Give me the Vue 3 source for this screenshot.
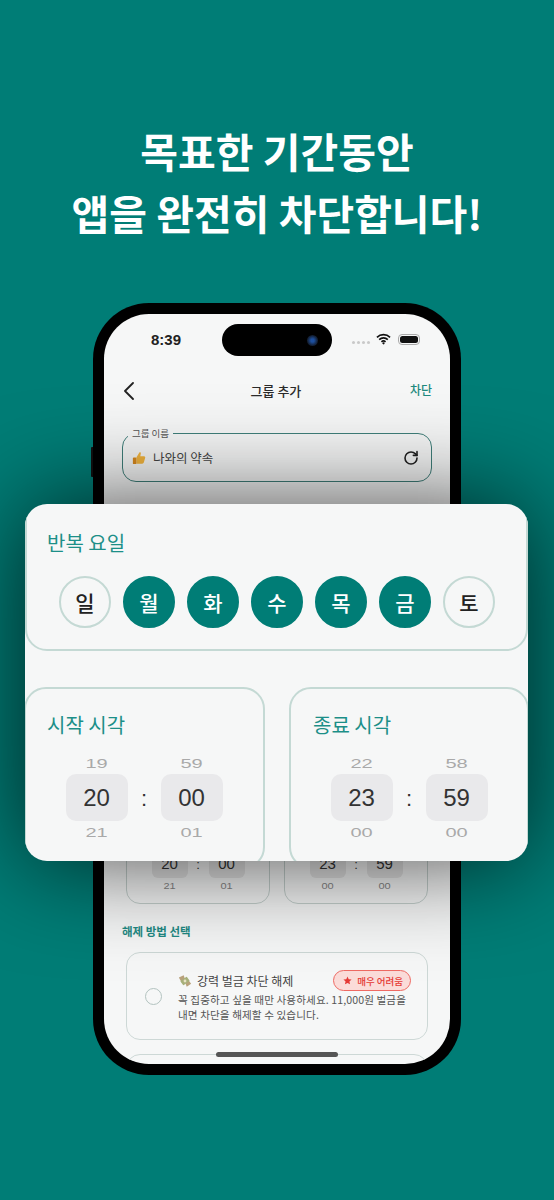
<script setup>
const days = [
  { label: '일', on: false },
  { label: '월', on: true },
  { label: '화', on: true },
  { label: '수', on: true },
  { label: '목', on: true },
  { label: '금', on: true },
  { label: '토', on: false }
]

const times = [
  { title: '시작 시각', hour: ['19', '20', '21'], min: ['59', '00', '01'] },
  { title: '종료 시각', hour: ['22', '23', '00'], min: ['58', '59', '00'] }
]
</script>

<template>
  <div class="page">
    <h1 class="headline">목표한 기간동안<br />앱을 완전히 차단합니다!</h1>

    <div class="phone">
      <span class="side-key"></span>
      <div class="screen">
        <div class="status">
          <span class="clock">8:39</span>
          <span class="island"><i class="camera"></i></span>
          <span class="signal"><i></i><i></i><i></i><i></i></span>
          <svg class="wifi" viewBox="0 0 16 12">
            <path d="M1 4.2a10 10 0 0 1 14 0M3.4 6.7a6.6 6.6 0 0 1 9.2 0M5.8 9a3.2 3.2 0 0 1 4.4 0" fill="none" stroke="#111" stroke-width="1.7" />
            <circle cx="8" cy="10.6" r="1.2" fill="#111" />
          </svg>
          <span class="battery"><i></i></span>
        </div>

        <div class="nav">
          <svg class="back" viewBox="0 0 10 18">
            <path d="M9 1 1 9l8 8" fill="none" stroke="#222" stroke-width="1.8" stroke-linecap="round" stroke-linejoin="round" />
          </svg>
          <span class="nav-title">그룹 추가</span>
          <span class="nav-action">차단</span>
        </div>

        <div class="name-field">
          <span class="field-label">그룹 이름</span>
          <svg class="thumb" viewBox="0 0 16 16">
            <path d="M5 7.5 8.4 1.6c.9-.6 1.9 0 1.7 1.2L9.5 6h4.2c1.2 0 1.7 1 1.3 2l-1.5 5.2c-.3.8-.9 1.3-1.8 1.3H5z" fill="#f4b63f" />
            <rect x="1" y="7.5" width="4" height="7.4" rx="1" fill="#d98a1f" />
          </svg>
          <span class="field-text">나와의 약속</span>
          <svg class="reload" viewBox="0 0 24 24">
            <path d="M21 12a9 9 0 1 1-9-9c2.52 0 4.93 1 6.74 2.74L21 8" fill="none" stroke="#222" stroke-width="2.4" stroke-linecap="round" stroke-linejoin="round" />
            <path d="M21 2.5V8h-5.5" fill="none" stroke="#222" stroke-width="2.4" stroke-linecap="round" stroke-linejoin="round" />
          </svg>
        </div>

        <!-- covered by the zoomed card -->
        <div class="day-card"></div>

        <div class="mini-row">
          <div class="mini-card" v-for="t in times" :key="t.title">
            <div class="mini-picker">
              <div class="mini-col">
                <span class="mini-side">{{ t.hour[0] }}</span>
                <span class="mini-now">{{ t.hour[1] }}</span>
                <span class="mini-side">{{ t.hour[2] }}</span>
              </div>
              <span class="mini-colon">:</span>
              <div class="mini-col">
                <span class="mini-side">{{ t.min[0] }}</span>
                <span class="mini-now">{{ t.min[1] }}</span>
                <span class="mini-side">{{ t.min[2] }}</span>
              </div>
            </div>
          </div>
        </div>

        <div class="method-title">해제 방법 선택</div>

        <div class="method-card">
          <span class="radio"></span>
          <div class="method-body">
            <div class="method-head">
              <svg class="money" viewBox="0 0 16 16">
                <path d="M1 4 6.5 1.5 8 6 4 9.5z" fill="#b9a27c" />
                <path d="M15 11 10 14.5 8.5 10.5 12 7z" fill="#b9a27c" />
                <rect x="3.5" y="5" width="9" height="6" rx=".8" transform="rotate(-35 8 8)" fill="#a7b07a" />
                <circle cx="8" cy="8" r="1.6" fill="#e8e2c4" />
              </svg>
              <span class="method-name">강력 벌금 차단 해제</span>
              <span class="badge">
                <svg class="star" viewBox="0 0 12 12">
                  <path d="m6 .8 1.6 3.5 3.8.4-2.8 2.6.8 3.8L6 9.2l-3.4 1.9.8-3.8L.6 4.7l3.8-.4z" fill="#e53935" />
                </svg>
                매우 어려움
              </span>
            </div>
            <p class="method-text">꼭 집중하고 싶을 때만 사용하세요. 11,000원 벌금을<br />내면 차단을 해제할 수 있습니다.</p>
          </div>
        </div>

        <div class="method-card next"></div>
        <span class="home-bar"></span>
      </div>
    </div>

    <div class="zoom-card">
      <section class="days">
        <h2 class="zoom-title">반복 요일</h2>
        <div class="day-row">
          <span v-for="d in days" :key="d.label" class="day" :class="{ on: d.on }">{{ d.label }}</span>
        </div>
      </section>

      <div class="time-row">
        <section class="time-card" v-for="t in times" :key="t.title">
          <h2 class="zoom-title">{{ t.title }}</h2>
          <div class="picker">
            <div class="col">
              <span class="side">{{ t.hour[0] }}</span>
              <span class="now">{{ t.hour[1] }}</span>
              <span class="side">{{ t.hour[2] }}</span>
            </div>
            <span class="colon">:</span>
            <div class="col">
              <span class="side">{{ t.min[0] }}</span>
              <span class="now">{{ t.min[1] }}</span>
              <span class="side">{{ t.min[2] }}</span>
            </div>
          </div>
        </section>
      </div>
    </div>
  </div>
</template>

<style scoped>
.page {
  position: relative;
  width: 554px;
  height: 1200px;
  overflow: hidden;
  background: #007d76;
  display: flex;
  flex-direction: column;
  align-items: center;
  font-family: "Noto Sans CJK KR", "Noto Sans", sans-serif;
}

.headline {
  margin: 119px 0 60px;
  color: #fff;
  font-size: 41px;
  line-height: 62px;
  font-weight: 700;
  text-align: center;
  white-space: nowrap;
}

/* phone */
.phone {
  position: relative;
  flex: none;
  width: 368px;
  height: 772px;
  padding: 11px;
  box-sizing: border-box;
  background: #000;
  border-radius: 56px;
}
.side-key {
  position: absolute;
  left: -2px;
  top: 144px;
  width: 2px;
  height: 30px;
  background: #111;
  border-radius: 1px 0 0 1px;
}
.screen {
  position: relative;
  height: 750px;
  padding: 0 18px;
  box-sizing: border-box;
  overflow: hidden;
  background: #f6f7f7;
  border-radius: 45px;
}

.status {
  position: relative;
  height: 52px;
  display: flex;
  align-items: center;
  margin: 0 -18px;
  padding-left: 47px;
  box-sizing: border-box;
}
.clock {
  font-family: "Liberation Sans", sans-serif;
  font-size: 15px;
  font-weight: 700;
  color: #222;
  width: 71px;
  margin-top: -2px;
}
.island {
  display: block;
  position: relative;
  width: 110px;
  height: 32px;
  margin-top: -1px;
  border-radius: 16px;
  background: #000;
}
.camera {
  position: absolute;
  left: 85px;
  top: 11px;
  width: 11px;
  height: 11px;
  border-radius: 50%;
  background: radial-gradient(circle, #1d4f9e 20%, #14233c 60%, #0b0b0f 100%);
}
.signal {
  display: flex;
  gap: 2px;
  margin-left: 20px;
  margin-top: 4px;
}
.signal i {
  width: 3px;
  height: 3px;
  border-radius: 50%;
  background: #c9c9c9;
}
.wifi {
  width: 15px;
  height: 12px;
  margin-left: 6px;
  margin-top: -2px;
}
.battery {
  display: block;
  width: 22px;
  height: 11px;
  margin-left: 7px;
  margin-top: -1px;
  padding: 1px;
  box-sizing: border-box;
  border: 1px solid #aaa;
  border-radius: 4px;
}
.battery i {
  display: block;
  height: 100%;
  background: #111;
  border-radius: 2.5px;
}

.nav {
  height: 48px;
  display: flex;
  align-items: center;
  justify-content: space-between;
  padding-left: 2px;
}
.back {
  width: 10px;
  height: 18px;
  margin-top: 1px;
}
.nav-title {
  font-size: 13px;
  font-weight: 500;
  color: #2b2b2b;
  margin-left: 8px;
}
.nav-action {
  font-size: 12px;
  font-weight: 500;
  color: #1f8a7f;
  margin-top: -1px;
}

.name-field {
  position: relative;
  height: 49px;
  margin-top: 19px;
  padding: 0 12px 0 9px;
  box-sizing: border-box;
  display: flex;
  align-items: center;
  border: 1px solid #3f7f7a;
  border-radius: 14px;
}
.field-label {
  position: absolute;
  left: 5px;
  top: -7px;
  padding: 0 4px;
  background: #f6f7f7;
  font-size: 9.5px;
  line-height: 13px;
  color: #555;
}
.thumb {
  width: 14px;
  height: 14px;
  margin-right: 7px;
  margin-top: 1px;
}
.field-text {
  flex: 1;
  font-size: 12.5px;
  color: #444;
}
.reload {
  width: 16px;
  height: 16px;
}

.day-card {
  height: 274px;
  margin: 24px 4px 15px;
}

.mini-row {
  display: flex;
  gap: 14px;
  margin: 0 4px;
}
.mini-card {
  flex: 1;
  height: 109px;
  box-sizing: border-box;
  border: 1px solid #c4d0cd;
  border-radius: 14px;
  display: flex;
  align-items: flex-end;
  justify-content: center;
  padding-bottom: 9px;
}
.mini-picker {
  display: flex;
  align-items: center;
  font-family: "Liberation Sans", sans-serif;
}
.mini-col {
  display: flex;
  flex-direction: column;
  align-items: center;
  width: 36px;
}
.mini-side {
  height: 16px;
  font-size: 11px;
  line-height: 16px;
  color: #888;
  transform: scaleY(.75);
}
.mini-now {
  width: 36px;
  height: 28px;
  border-radius: 6px;
  background: #e4e4e4;
  text-align: center;
  font-size: 15px;
  line-height: 28px;
  color: #333;
}
.mini-colon {
  width: 21px;
  text-align: center;
  font-size: 13px;
  color: #333;
}

.method-title {
  margin-top: 19px;
  height: 16px;
  font-size: 11.5px;
  line-height: 16px;
  font-weight: 700;
  color: #1f8a84;
}
.method-card {
  height: 88px;
  margin: 13px 4px 0;
  padding: 0 16px 0 18px;
  box-sizing: border-box;
  display: flex;
  align-items: center;
  gap: 16px;
  border: 1px solid #cdd8d6;
  border-radius: 14px;
}
.method-card.next {
  margin-top: 14px;
}
.radio {
  flex: none;
  width: 17px;
  height: 17px;
  box-sizing: border-box;
  border: 1.5px solid #b3c3c0;
  border-radius: 50%;
}
.method-body {
  flex: 1;
  min-width: 0;
}
.method-head {
  display: flex;
  align-items: center;
}
.money {
  width: 14px;
  height: 14px;
  margin-right: 5px;
}
.method-name {
  flex: 1;
  font-size: 12px;
  color: #444;
  white-space: nowrap;
}
.badge {
  display: flex;
  align-items: center;
  gap: 5px;
  height: 21px;
  padding: 0 7px 0 9px;
  box-sizing: border-box;
  border: 1px solid #ef6a63;
  border-radius: 11px;
  background: #fbdcd9;
  font-size: 9.5px;
  font-weight: 500;
  color: #e53935;
  white-space: nowrap;
}
.star {
  width: 9px;
  height: 9px;
}
.method-text {
  margin: 1px 0 0;
  font-size: 10.6px;
  line-height: 15px;
  letter-spacing: .1px;
  color: #555;
  white-space: nowrap;
}
.home-bar {
  position: absolute;
  left: 112px;
  bottom: 7px;
  width: 122px;
  height: 5px;
  border-radius: 3px;
  background: #555;
}

/* zoomed card on top of the phone */
.zoom-card {
  position: absolute;
  left: 25px;
  top: 504px;
  width: 503px;
  height: 357px;
  overflow: hidden;
  border-radius: 22px;
  background: #f6f7f7;
  box-shadow: 0 0 100px rgba(0, 0, 0, .72);
}
.zoom-title {
  margin: 0;
  font-size: 20px;
  line-height: 24px;
  font-weight: 400;
  color: #1c8f88;
}
.days {
  margin-top: -24px;
  height: 171px;
  padding: 49px 0 0 20px;
  box-sizing: border-box;
  border: 2px solid #c4d9d4;
  border-radius: 22px;
}
.day-row {
  display: flex;
  gap: 12px;
  margin-top: 21px;
  padding-left: 12px;
}
.day {
  flex: none;
  width: 52px;
  height: 52px;
  box-sizing: border-box;
  border: 2px solid #c4d9d4;
  border-radius: 50%;
  display: flex;
  align-items: center;
  justify-content: center;
  font-size: 21px;
  font-weight: 500;
  color: #222;
}
.day.on {
  border-color: #007d76;
  background: #007d76;
  color: #fff;
}
.time-row {
  display: flex;
  gap: 24px;
  margin-top: 36px;
}
.time-card {
  flex: none;
  width: 240px;
  height: 182px;
  padding: 24px 0 0 22px;
  box-sizing: border-box;
  border: 2px solid #c4d9d4;
  border-radius: 22px;
}
.time-card:first-child {
  width: 241px;
  margin-left: -1px;
  padding-left: 21px;
}
.picker {
  display: flex;
  align-items: center;
  justify-content: center;
  margin: 15px 0 0 -22px;
  font-family: "Liberation Sans", sans-serif;
}
.col {
  display: flex;
  flex-direction: column;
  align-items: center;
  width: 62px;
}
.side {
  height: 22px;
  font-size: 20px;
  line-height: 22px;
  color: #a9a9a9;
  transform: scaleY(.65);
}
.now {
  width: 62px;
  height: 47px;
  border-radius: 10px;
  background: #e9e9eb;
  text-align: center;
  font-size: 24px;
  line-height: 47px;
  color: #333;
}
.colon {
  width: 33px;
  padding-top: 3px;
  text-align: center;
  font-size: 22px;
  color: #333;
}
</style>
